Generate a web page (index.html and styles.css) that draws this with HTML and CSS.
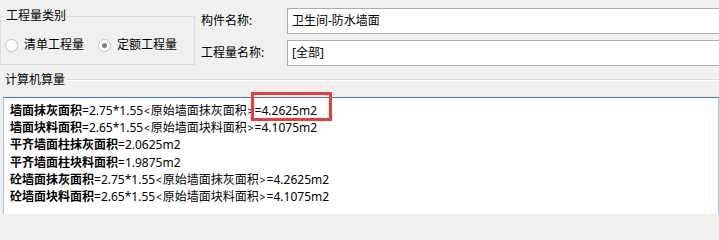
FILE: index.html
```html
<!DOCTYPE html>
<html lang="zh-CN">
<head>
<meta charset="utf-8">
<title>工程量</title>
<link rel="stylesheet" href="styles.css">
</head>
<body>
<div class="page">
  <div class="top">
    <fieldset class="kind">
      <legend>工程量类别</legend>
      <div class="radios">
        <label class="opt"><span class="radio"></span>清单工程量</label>
        <label class="opt opt2"><span class="radio checked"></span>定额工程量</label>
      </div>
    </fieldset>
    <div class="form">
      <span class="lbl">构件名称:</span>
      <div class="field">卫生间-防水墙面</div>
      <span class="lbl">工程量名称:</span>
      <div class="field">[全部]</div>
    </div>
  </div>
  <div class="calc-head">
    <span class="calc-title">计算机算量</span>
    <span class="rule"></span>
  </div>
  <div class="textbox">
    <div class="ln"><b>墙面抹灰面积</b>=2.75*1.55<span class="ang">&lt;</span>原始墙面抹灰面积<span class="ang">&gt;</span>=4.2625m2</div>
    <div class="ln"><b>墙面块料面积</b>=2.65*1.55<span class="ang">&lt;</span>原始墙面块料面积<span class="ang">&gt;</span>=4.1075m2</div>
    <div class="ln"><b>平齐墙面柱抹灰面积</b>=2.0625m2</div>
    <div class="ln"><b>平齐墙面柱块料面积</b>=1.9875m2</div>
    <div class="ln"><b>砼墙面抹灰面积</b>=2.75*1.55<span class="ang">&lt;</span>原始墙面抹灰面积<span class="ang">&gt;</span>=4.2625m2</div>
    <div class="ln"><b>砼墙面块料面积</b>=2.65*1.55<span class="ang">&lt;</span>原始墙面块料面积<span class="ang">&gt;</span>=4.1075m2</div>
  </div>
  <div class="highlight"></div>
</div>
</body>
</html>
```

FILE: styles.css
```css
html, body {
  margin: 0;
  padding: 0;
}
body {
  width: 719px;
  height: 214px;
  overflow: hidden;
  background: #f0f0f0;
  color: #000;
  font-family: "Noto Sans", "Noto Sans CJK SC", sans-serif;
  font-size: 12px;
}
.page {
  position: relative;
  width: 719px;
  height: 214px;
  overflow: hidden;
}
.top {
  display: flex;
  align-items: flex-start;
  height: 70px;
}
.kind {
  box-sizing: border-box;
  margin: 8px 0 0 0;
  padding: 0;
  width: 195px;
  min-width: 0;
  height: 57px;
  border: 1px solid #dcdcdc;
  flex: none;
}
.kind legend {
  margin-left: 4px;
  padding: 0 1px;
  line-height: 16px;
  height: 16px;
}
.radios {
  display: flex;
  align-items: center;
  margin-top: 14px;
  height: 14px;
  padding-left: 4px;
}
.opt {
  display: flex;
  align-items: center;
  line-height: 14px;
}
.opt2 {
  margin-left: 14px;
}
.radio {
  box-sizing: border-box;
  width: 13px;
  height: 13px;
  border: 1px solid #c4c4c4;
  border-radius: 50%;
  background: #fff;
  margin-right: 6px;
  display: flex;
  align-items: center;
  justify-content: center;
}
.radio.checked::after {
  content: "";
  width: 5px;
  height: 5px;
  border-radius: 50%;
  background: #7a7f8a;
}
.form {
  margin-top: 8px;
  padding-left: 6px;
  display: grid;
  grid-template-columns: 86px 460px;
  row-gap: 6px;
  flex: none;
}
.lbl {
  line-height: 26px;
  height: 26px;
}
.field {
  box-sizing: border-box;
  height: 26px;
  line-height: 24px;
  border: 1px solid #ababab;
  background: #fff;
  padding-left: 4px;
}
.calc-head {
  display: flex;
  align-items: center;
  height: 16px;
  margin-top: 2px;
}
.calc-title {
  line-height: 16px;
  padding-left: 5px;
  padding-right: 2px;
}
.rule {
  flex: 1;
  height: 0;
  border-top: 1px solid #dcdcdc;
  border-bottom: 1px solid #ffffff;
}
.textbox {
  box-sizing: border-box;
  margin: 9px 0 0 3px;
  width: 716px;
  height: 130px;
  background: #fff;
  border-top: 1px solid #3e7ab0;
  border-left: 1px solid #a9bfd6;
  border-right: 1px solid #9ccbe9;
  padding: 4px 0 0 6px;
}
.ln {
  line-height: 17.2px;
  height: 17.2px;
  white-space: nowrap;
}
.ln b {
  font-weight: 700;
}
.ang {
  font-size: 10px;
  padding: 0 1px;
}
.highlight {
  position: absolute;
  left: 251px;
  top: 92px;
  width: 81px;
  height: 29px;
  box-sizing: border-box;
  border: 3px solid #ee3a3a;
}
```
